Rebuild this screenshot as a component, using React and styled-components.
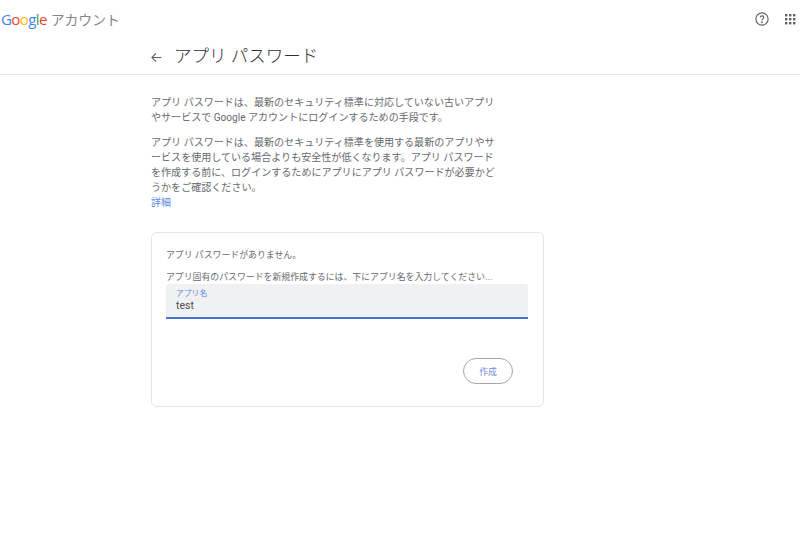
import React from "react";
import styled, { createGlobalStyle } from "styled-components";

const cjk = `"Roboto", "Noto Sans CJK JP", sans-serif`;

const Global = createGlobalStyle`
  html, body { margin: 0; padding: 0; background: #fff; }
  body { font-family: ${cjk}; color: #5f6368; }
`;

const Page = styled.div`
  width: 800px;
  height: 552px;
  overflow: hidden;
  background: #fff;
`;

const TopBar = styled.header`
  height: 37px;
  display: flex;
  align-items: center;
  justify-content: space-between;
  padding: 0 2px 0 1px;
`;

const Brand = styled.div`
  display: flex;
  align-items: center;
  gap: 4px;
`;

const Logo = styled.span`
  font-family: "Open Sans", "Liberation Sans", sans-serif;
  font-size: 15px;
  letter-spacing: -0.6px;
  font-weight: 500;
`;

const LogoLetter = styled.span`
  color: ${(p) => p.$c};
`;

const BrandName = styled.span`
  font-size: 13.8px;
  color: #80868b;
`;

const Tools = styled.div`
  display: flex;
  align-items: center;
  gap: 13px;
`;

const TitleBar = styled.div`
  height: 38px;
  box-sizing: border-box;
  border-bottom: 1px solid #e3e4e6;
  padding: 0 0 0 151px;
  display: flex;
  align-items: flex-start;
  gap: 12px;
`;

const BackIcon = styled.svg`
  width: 11px;
  height: 11px;
  margin-top: 15px;
`;

const Title = styled.h1`
  margin: 6px 0 0;
  font-size: 17.5px;
  line-height: 26px;
  font-weight: 300;
  color: #2f3235;
`;

const Main = styled.main`
  padding: 20px 0 0 151px;
`;

const Para = styled.p`
  width: 346px;
  margin: 0 0 ${(p) => p.$gap || 0}px;
  font-size: 10.05px;
  line-height: 15px;
  color: #66696e;
  line-break: strict;
`;

const More = styled.a`
  display: block;
  font-size: 10px;
  line-height: 15px;
  color: #5c88df;
`;

const Card = styled.section`
  box-sizing: border-box;
  width: 393px;
  height: 175px;
  margin-top: 22px;
  padding: 16px 15px 0 14px;
  border: 1px solid #e4e5e7;
  border-radius: 6px;
`;

const CardLine = styled.p`
  margin: 0 0 ${(p) => p.$gap || 0}px;
  font-size: 8.9px;
  line-height: 13px;
  color: #66696e;
  white-space: nowrap;
`;

const Field = styled.div`
  box-sizing: border-box;
  width: 362px;
  height: 35px;
  padding: 4px 10px 0;
  background: #f0f1f3;
  border-bottom: 2px solid #4a73cf;
  border-radius: 3px 3px 0 0;
`;

const FieldLabel = styled.div`
  font-size: 7.8px;
  line-height: 11px;
  color: #5c88df;
`;

const FieldValue = styled.div`
  font-size: 10.5px;
  line-height: 14px;
  color: #4a4d51;
`;

const Actions = styled.div`
  display: flex;
  justify-content: flex-end;
  margin-top: 39px;
  width: 347px;
`;

const Button = styled.button`
  box-sizing: border-box;
  width: 50px;
  height: 26px;
  padding: 0;
  border: 1px solid #a3a6aa;
  border-radius: 13px;
  background: #fff;
  color: #6d8fe0;
  font-family: ${cjk};
  font-size: 8.8px;
`;

const google = [
  ["G", "#4285f4"],
  ["o", "#ea4335"],
  ["o", "#fbbc05"],
  ["g", "#4285f4"],
  ["l", "#34a853"],
  ["e", "#ea4335"],
];

const HelpIcon = () => (
  <svg width="14" height="14" viewBox="0 0 24 24" fill="none" stroke="#5f6368" strokeWidth="2">
    <circle cx="12" cy="12" r="10.5" />
    <path d="M9 9.5a3 3 0 0 1 6 0c0 2-3 2.4-3 4.8" />
    <circle cx="12" cy="17.6" r="0.6" fill="#5f6368" />
  </svg>
);

const AppsIcon = () => (
  <svg width="16" height="16" viewBox="0 0 16 16" fill="#5f6368">
    {[3, 7, 11].flatMap((y) =>
      [3, 7, 11].map((x) => <rect key={`${x}-${y}`} x={x} y={y} width="2.4" height="2.4" />)
    )}
  </svg>
);

export default function App() {
  return (
    <Page>
      <Global />
      <TopBar>
        <Brand>
          <Logo>
            {google.map(([l, c], i) => (
              <LogoLetter key={i} $c={c}>{l}</LogoLetter>
            ))}
          </Logo>
          <BrandName>アカウント</BrandName>
        </Brand>
        <Tools>
          <HelpIcon />
          <AppsIcon />
        </Tools>
      </TopBar>
      <TitleBar>
        <BackIcon viewBox="0 0 12 12" fill="none" stroke="#5f6368" strokeWidth="1.2">
          <path d="M11.5 6H1M5.5 1.5 1 6l4.5 4.5" />
        </BackIcon>
        <Title>アプリ パスワード</Title>
      </TitleBar>
      <Main>
        <Para $gap={10}>
          アプリ パスワードは、最新のセキュリティ標準に対応していない古いアプリやサービスで Google アカウントにログインするための手段です。
        </Para>
        <Para>
          アプリ パスワードは、最新のセキュリティ標準を使用する最新のアプリやサービスを使用している場合よりも安全性が低くなります。アプリ パスワードを作成する前に、ログインするためにアプリにアプリ パスワードが必要かどうかをご確認ください。
        </Para>
        <More>詳細</More>
        <Card>
          <CardLine $gap={9}>アプリ パスワードがありません。</CardLine>
          <CardLine>アプリ固有のパスワードを新規作成するには、下にアプリ名を入力してください...</CardLine>
          <Field>
            <FieldLabel>アプリ名</FieldLabel>
            <FieldValue>test</FieldValue>
          </Field>
          <Actions>
            <Button>作成</Button>
          </Actions>
        </Card>
      </Main>
    </Page>
  );
}
